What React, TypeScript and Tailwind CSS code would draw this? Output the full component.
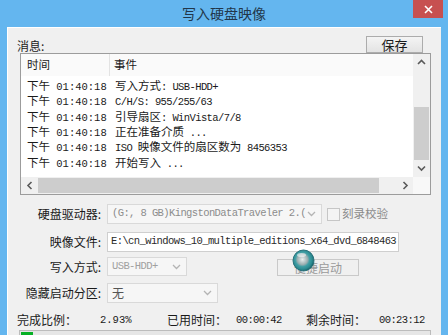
import React from 'react';

const CJK_FONT = "font-['Noto_Sans_CJK_SC',sans-serif]";
const MONO_FONT = "font-['Liberation_Mono','Noto_Sans_CJK_SC',monospace]";

function Mixed({ text, cjk, latin }: { text: string; cjk: string; latin: string }) {
  const parts = text.split(/([\u3000-\u9fff\uff00-\uffef]+)/).filter(Boolean);
  return (
    <>
      {parts.map((p, i) =>
        /[\u3000-\u9fff\uff00-\uffef]/.test(p) ? (
          <span key={i} className={cjk}>{p}</span>
        ) : (
          <span key={i} className={latin}>{p}</span>
        )
      )}
    </>
  );
}

function Chevron({ dir, color = "#5a5a5a" }: { dir: "up" | "down" | "left" | "right"; color?: string }) {
  const d = {
    up: "M1 5 L4.5 1.5 L8 5",
    down: "M1 1.5 L4.5 5 L8 1.5",
    left: "M5.5 1 L2 4.5 L5.5 8",
    right: "M2.5 1 L6 4.5 L2.5 8",
  }[dir];
  const vertical = dir === "up" || dir === "down";
  return (
    <svg width={vertical ? 9 : 8} height={vertical ? 7 : 9} viewBox={vertical ? "0 0 9 7" : "0 0 8 9"}>
      <path d={d} fill="none" stroke={color} strokeWidth="1.6" />
    </svg>
  );
}

function ComboArrow() {
  return (
    <svg width="9" height="6" viewBox="0 0 9 6">
      <path d="M1 1 L4.5 4.5 L8 1" fill="none" stroke="#b4b4b4" strokeWidth="1.3" />
    </svg>
  );
}

function BusyIcon() {
  return (
    <svg width="23" height="23" viewBox="0 0 23 23">
      <defs>
        <radialGradient id="ball" cx="0.45" cy="0.45" r="0.55">
          <stop offset="0" stopColor="#e8eeee" />
          <stop offset="0.45" stopColor="#9aaeb0" />
          <stop offset="0.62" stopColor="#3f9ea4" />
          <stop offset="0.85" stopColor="#2b8a90" />
          <stop offset="1" stopColor="#1b646a" />
        </radialGradient>
      </defs>
      <circle cx="11.5" cy="11.5" r="10.5" fill="url(#ball)" stroke="#27707a" strokeWidth="1" />
      <ellipse cx="9.5" cy="6" rx="4.5" ry="2" fill="#ffffff" opacity="0.55" />
    </svg>
  );
}

export default function App() {
  const log = [
    "写入方式: USB-HDD+",
    "C/H/S: 955/255/63",
    "引导扇区: WinVista/7/8",
    "正在准备介质 ...",
    "ISO 映像文件的扇区数为 8456353",
    "开始写入 ...",
  ];

  const cjk = `${CJK_FONT} text-[11.5px]`;
  const mono = `${MONO_FONT} text-[10.5px] tracking-[-0.6px]`;

  return (
    <div className={`w-[448px] h-[335px] overflow-hidden bg-[#64b6ef] flex flex-col ${CJK_FONT} text-[#1a1a1a]`}>
      {/* TITLE BAR */}
      <div className="h-[27px] shrink-0 grid grid-cols-[1fr_auto_1fr]">
        <div />
        <div className="text-[14px] text-[#22364a] pt-[4px] leading-[18px]">写入硬盘映像</div>
        <div className="flex justify-end pr-[5px]">
          <div className="w-[30px] h-[18px] bg-[#c75050] flex items-center justify-center">
            <svg width="9" height="9" viewBox="0 0 9 9">
              <path d="M1 1 L8 8 M8 1 L1 8" stroke="#ffffff" strokeWidth="1.6" />
            </svg>
          </div>
        </div>
      </div>

      {/* CLIENT */}
      <div className="flex-1 mx-[7px] bg-[#f0f0f0] border-l border-t border-white pl-[9px] pr-[10px]">
        {/* message header */}
        <div className="flex items-end justify-between pt-[8px]">
          <span className="text-[12px] leading-[12px] mb-[1px]">消息:</span>
          <div className="w-[57px] h-[17px] mr-[8px] border border-[#acacac] bg-gradient-to-b from-[#f4f4f4] to-[#e3e3e3] flex items-center justify-center text-[13px] leading-none">
            保存
          </div>
        </div>

        {/* LIST */}
        <div className="ml-[3px] h-[142px] border border-[#9c9c9c] bg-white flex flex-col">
          <div className="flex-1 flex min-h-0">
            <div className="flex-1 flex flex-col">
              <div className="h-[22px] flex bg-[#fafafa] text-[11.5px]">
                <div className="w-[89px] pl-[6px] flex items-center border-r border-[#e3e3e3]">时间</div>
                <div className="pl-[4px] flex items-center">事件</div>
              </div>
              <div className="pt-[2px]">
                {log.map((line, idx) => (
                  <div key={idx} className="h-[15.3px] flex items-center whitespace-pre leading-[15px]">
                    <div className="w-[90px] pl-[6px]">
                      <span className={cjk}>下午</span>
                      <span className={`${MONO_FONT} text-[10.5px]`}> 01:40:18</span>
                    </div>
                    <div className="pl-[4px]">
                      <Mixed text={line} cjk={cjk} latin={mono} />
                    </div>
                  </div>
                ))}
              </div>
            </div>
            {/* vertical scrollbar */}
            <div className="w-[17px] bg-[#f0f0f0] flex flex-col">
              <div className="h-[17px] flex items-center justify-center"><Chevron dir="up" /></div>
              <div className="flex-1 flex flex-col px-[1px]">
                <div className="h-[36px]" />
                <div className="h-[53px] bg-[#cdcdcd]" />
              </div>
              <div className="h-[17px] flex items-center justify-center"><Chevron dir="down" /></div>
            </div>
          </div>
          {/* horizontal scrollbar */}
          <div className="h-[17px] flex bg-[#f0f0f0]">
            <div className="w-[17px] flex items-center justify-center"><Chevron dir="left" /></div>
            <div className="flex-1 flex py-[1px]">
              <div className="w-[341px] bg-[#cdcdcd]" />
            </div>
            <div className="w-[17px] flex items-center justify-center"><Chevron dir="right" /></div>
            <div className="w-[17px] bg-[#f8f8f8]" />
          </div>
        </div>

        {/* FORM */}
        <div className="flex flex-col">
          <div className="mt-[9px] h-[20px] flex items-center">
            <div className="w-[86px] pr-[2px] text-right text-[12px]">硬盘驱动器:</div>
            <div className="ml-[4px] w-[215px] h-[20px] border border-[#d9d9d9] bg-[#f6f6f6] flex items-center pl-[4px] pr-[5px]">
              <span className={`flex-1 whitespace-nowrap ${MONO_FONT} text-[10.5px] tracking-[-0.6px] text-[#8c8c8c]`}>
                (G:, 8 GB)KingstonDataTraveler 2.(
              </span>
              <ComboArrow />
            </div>
            <div className="ml-[5px] w-[13px] h-[13px] border border-[#c6c6c6] bg-[#f4f4f4]" />
            <span className="ml-[2px] text-[11.5px] text-[#8a8a8a]">刻录校验</span>
          </div>

          <div className="mt-[8px] h-[20px] flex items-center">
            <div className="w-[86px] pr-[2px] text-right text-[12px]">映像文件:</div>
            <div className="ml-[4px] w-[292px] h-[20px] border border-[#cfcfcf] bg-white flex items-center pl-[3px]">
              <span className={`whitespace-nowrap ${MONO_FONT} text-[10.5px] tracking-[-0.6px] text-[#2a2a2a]`}>
                E:\cn_windows_10_multiple_editions_x64_dvd_6848463
              </span>
            </div>
          </div>

          <div className="mt-[5px] h-[19px] flex items-center">
            <div className="w-[86px] pr-[2px] text-right text-[12px]">写入方式:</div>
            <div className="ml-[4px] w-[80px] h-[19px] border border-[#d9d9d9] bg-[#f6f6f6] flex items-center pl-[4px] pr-[5px]">
              <span className={`flex-1 whitespace-nowrap ${MONO_FONT} text-[10.5px] tracking-[-0.6px] text-[#a0a0a0]`}>USB-HDD+</span>
              <ComboArrow />
            </div>
            <div className="relative ml-[90px] mt-[2px] w-[82px] h-[17px] border border-[#c9c9c9] bg-[#f0f0f0] flex items-center justify-center text-[12px] text-[#9a9a9a]">
              便捷启动
              <div className="absolute left-[14px] top-[-11px]">
                <BusyIcon />
              </div>
            </div>
          </div>

          <div className="mt-[7px] h-[20px] flex items-center">
            <div className="w-[86px] pr-[2px] text-right text-[12px]">隐藏启动分区:</div>
            <div className="ml-[4px] w-[111px] h-[20px] border border-[#d9d9d9] bg-[#f6f6f6] flex items-center pl-[4px] pr-[5px]">
              <span className="flex-1 text-[12px] text-[#555555]">无</span>
              <ComboArrow />
            </div>
          </div>

          {/* STATUS */}
          <div className="mt-[10px] h-[14px] flex items-center text-[12px] leading-none whitespace-nowrap">
            <div className="w-[83px]">完成比例：</div>
            <div className={`w-[67px] ${MONO_FONT} text-[10.5px]`}>2.93%</div>
            <div className="w-[69px]">已用时间：</div>
            <div className={`w-[70px] ${MONO_FONT} text-[10.5px] tracking-[-0.6px]`}>00:00:42</div>
            <div className="w-[73px]">剩余时间：</div>
            <div className={`${MONO_FONT} text-[10.5px] tracking-[-0.6px]`}>00:23:12</div>
          </div>

          <div className="mt-[3px] ml-[2px] h-[14px] border border-[#bcbcbc] bg-[#e6e6e6] p-[1px] flex">
            <div className="w-[12px] bg-[#06b025]" />
          </div>
        </div>
      </div>
    </div>
  );
}
